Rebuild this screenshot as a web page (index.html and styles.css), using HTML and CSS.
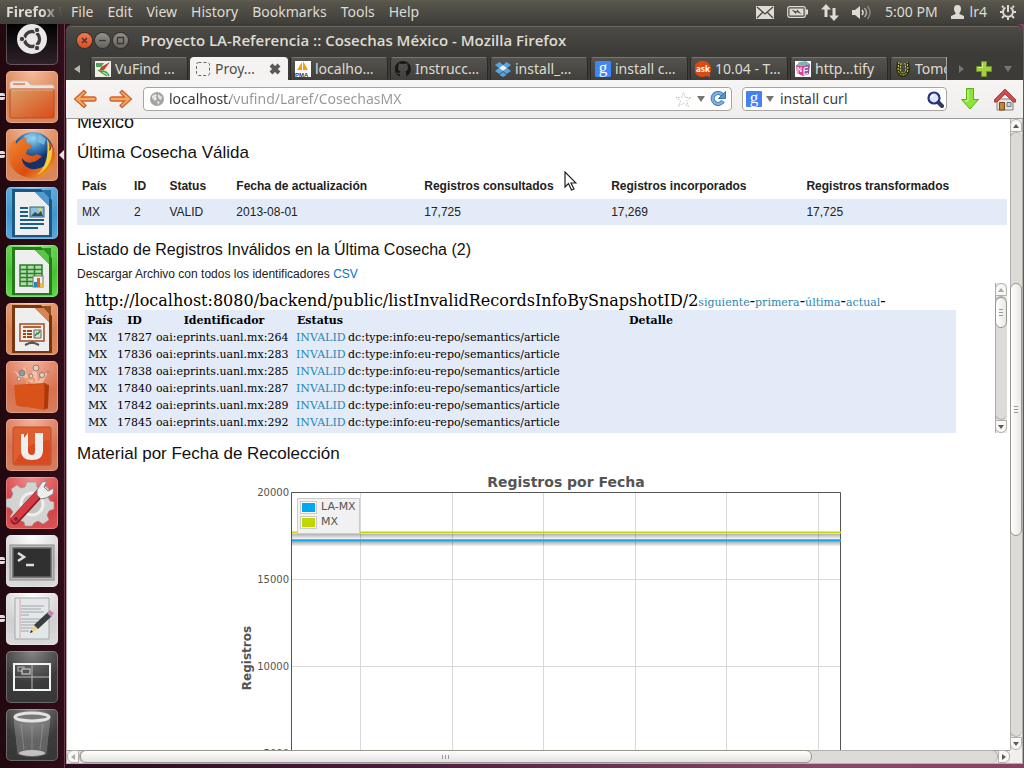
FILE: index.html
```html
<!DOCTYPE html>
<html lang="es">
<head>
<meta charset="utf-8">
<title>Proyecto LA-Referencia :: Cosechas México</title>
<link rel="stylesheet" href="styles.css">
</head>
<body>
<header class="panel">
  <span class="app-name">Firefox <span class="app-fade">W</span></span>
  <nav class="menus" aria-label="Menu">
    <button>File</button><button>Edit</button><button>View</button><button>History</button><button>Bookmarks</button><button>Tools</button><button>Help</button>
  </nav>
  <div class="tray">
    <button aria-label="Mail"><svg width="18" height="14" viewBox="0 0 18 14"><rect width="18" height="13" y="1" fill="#dfdbd2"/><path d="M1 2l8 7 8-7M1 13l6-6M17 13l-6-6" fill="none" stroke="#47463f" stroke-width="1.3"/></svg></button>
    <button aria-label="Battery"><svg width="21" height="12" viewBox="0 0 21 12"><rect x=".7" y=".7" width="17.6" height="10.6" rx="2" fill="none" stroke="#dfdbd2" stroke-width="1.2"/><rect x="2.500" y="2.500" width="14" height="7" fill="#dfdbd2"/><rect x="19" y="3.500" width="2" height="5" fill="#dfdbd2"/><path d="M4.500 3.500l5 2 .5-2 4.500 4.500-5-2-.5 2z" fill="#47463f"/></svg></button>
    <button aria-label="Network"><svg width="18" height="17" viewBox="0 0 18 17" fill="#dfdbd2"><path d="M5 0l5 5.500H6.500V13h-3V5.500H0zM13 17l-5-5.500h3.500V4h3v7.500H18z"/></svg></button>
    <button aria-label="Volume"><svg width="20" height="15" viewBox="0 0 20 15"><path d="M0 5h3l5-4v13l-5-4H0z" fill="#dfdbd2"/><g fill="none" stroke-width="1.600"><path d="M10 5q2 2.500 0 5" stroke="#dfdbd2"/><path d="M12.500 3q4 4.500 0 9" stroke="#aaa79d"/><path d="M15.500 1q5 6.500 0 13" stroke="#85837b"/></g></svg></button>
    <button class="clock">5:00 PM</button>
    <button class="user"><svg width="13" height="14" viewBox="0 0 13 14"><path d="M6.500 0c2.500 0 3.500 1.500 3.500 4 0 2-1 3-1.500 4v1l4.500 2v3H0v-3l4.500-2V8C4 7 3 6 3 4c0-2.500 1-4 3.500-4z" fill="#dfdbd2"/></svg>lr4</button>
    <button aria-label="Session"><svg width="16" height="16" viewBox="0 0 16 16" fill="none" stroke="#dfdbd2"><path d="M5.500 3.500a5 5 0 1 0 5 0" stroke-width="2"/><path d="M8 1v7" stroke-width="2"/><path d="M3.500 3.500L2 2M12.500 3.500L14 2M2.500 8H0M13.500 8H16M4 12l-2 2M12 12l2 2M8 13.500V16" stroke-width="2"/></svg></button>
  </div>
</header>

<div class="desktop">
<aside class="launcher">
  <button class="tile dash" aria-label="Dash"><svg viewBox="0 0 52 52"><circle cx="26" cy="26" r="15" fill="#e9e8e8"/><circle cx="26" cy="26" r="7.500" fill="none" stroke="#453a40" stroke-width="3.400"/><g stroke="#e9e8e8" stroke-width="1.500"><path d="M26 26H12M26 26l7 12M26 26l7-12"/></g><circle cx="26" cy="26" r="5.500" fill="#e9e8e8"/><g fill="#453a40" stroke="#e9e8e8"><circle cx="16" cy="26" r="2.700"/><circle cx="31" cy="17" r="2.700"/><circle cx="31" cy="35" r="2.700"/></g></svg></button>
  <button class="tile orange running" aria-label="Files"><svg viewBox="0 0 52 52"><defs><linearGradient id="fo" x2="1" y2="1"><stop stop-color="#d9a066"/><stop offset="1" stop-color="#dc4a18"/></linearGradient></defs><path d="M4 21V12l2-2h15l4 4h22l1 2v6z" fill="#eee4df" stroke="#d7b7a6"/><path d="M7 13h12" stroke="#e49468" stroke-width="2"/><rect x="4" y="18" width="44" height="29" rx="1" fill="url(#fo)" stroke="#b94d24"/><path d="M5 19h42" stroke="#ebb184"/></svg></button>
  <button class="tile orange running active" aria-label="Firefox"><svg viewBox="0 0 52 52"><defs><radialGradient id="gl" cx=".5" cy=".15"><stop stop-color="#9ed7f1"/><stop offset=".5" stop-color="#3b83bf"/><stop offset="1" stop-color="#14316a"/></radialGradient><linearGradient id="fx" x2="1" y2="1"><stop stop-color="#f18a2c"/><stop offset=".6" stop-color="#db4c14"/><stop offset="1" stop-color="#f3bb34"/></linearGradient></defs><circle cx="27" cy="24" r="21" fill="url(#gl)"/><path d="M18 7l6-2 3 4-5 5zM33 5l7 5-2 6-6-3z" fill="#8ec8e4" opacity=".7"/><path d="M5 14l4-4 1 5c4-5 7-6 11-6-2 3-1 4 1 6l4 1c1 2-3 4-5 5l-1 4c3 1 6 3 9 1 3-1 5 0 7 2-3 1-4 4-9 5-5 2-9-1-11-4 0 7 6 12 14 11 9-1 15-8 15-17 0-5-1-9-5-13 6 4 9 11 9 18 0 12-10 21-22 21C13 49 3 39 3 27c0-5 0-9 2-13z" fill="url(#fx)"/><path d="M41 10c3 5 3 9 2 12 2-1 2-3 3-5 2 14-6 25-15 29 8-7 12-17 10-36z" fill="#f7cd3e"/></svg></button>
  <button class="tile blue" aria-label="Writer"><svg viewBox="0 0 52 52"><path d="M6 2h29l11 11v37H6z" fill="#1c5684"/><path d="M9 5h20l14 14v29H9z" fill="#eee"/><path d="M29 5l14 14V10l-5-5z" fill="#4e9dce"/><path d="M36 3h9v10z" fill="#286e9e"/><path d="M14 21h8M14 25h8M14 29h8M14 33h24M14 37h24M14 41h18" stroke="#195d8c" stroke-width="2"/><rect x="24" y="20" width="14" height="10" fill="#8bc2e0" stroke="#34627c"/><path d="M25 29l4-4 3 2 3-3 2 5z" fill="#364d4a"/><circle cx="34" cy="22.500" r="1.500" fill="#f7cf3c"/></svg></button>
  <button class="tile green" aria-label="Calc"><svg viewBox="0 0 52 52"><path d="M6 2h29l11 11v37H6z" fill="#257a1c"/><path d="M9 5h20l14 14v29H9z" fill="#eee"/><path d="M29 5l14 14V10l-5-5z" fill="#5ac646"/><path d="M36 3h9v10z" fill="#2f8f25"/><path d="M14 20h22v21H14z" fill="#b5dba9"/><path d="M14 20h22v21H14zM14 24.500h22M14 28.500h22M14 32.500h22M14 36.500h22M21 20v21M28.500 20v21" stroke="#28812a" stroke-width="1.500" fill="none"/><rect x="27" y="31" width="10" height="11" fill="#eee" stroke="#777"/><path d="M28 37h3v5h-3z" fill="#1b86c4"/><path d="M31 33h3v9h-3z" fill="#da6421"/><path d="M34 38h3v4h-3z" fill="#edc134"/></svg></button>
  <button class="tile orange" aria-label="Impress"><svg viewBox="0 0 52 52"><path d="M6 2h29l11 11v37H6z" fill="#783710"/><path d="M9 5h20l14 14v29H9z" fill="#eee"/><path d="M29 5l14 14V10l-5-5z" fill="#d78752"/><path d="M36 3h9v10z" fill="#944c20"/><rect x="14" y="21" width="24" height="17" fill="#f8eee7" stroke="#9e4e21" stroke-width="1.500"/><path d="M17 24h18" stroke="#b76334" stroke-width="2"/><path d="M17 28h3M17 31h3M17 34h3M21 28h5M21 31h5M21 34h5" stroke="#944a20" stroke-width="2"/><path d="M28 27h7v8h-7z" fill="#ddd" stroke="#666"/><path d="M29 33l2-3 1 1 2-3" stroke="#239641" fill="none" stroke-width="1.400"/><path d="M26 38v3M26 39l-7 3M26 39l7 3" stroke="#555" stroke-width="2"/></svg></button>
  <button class="tile coral" aria-label="Software Center"><svg viewBox="0 0 52 52"><path d="M25 22L8 9l7 12L18 5l5 14L30 3l2 17 11-11-7 14z" fill="#fff" opacity=".4"/><g fill="#dcd5cc" stroke="#a57567"><circle cx="16" cy="12" r="3" fill="#7d9db6"/><circle cx="30" cy="7" r="3"/><circle cx="36" cy="14" r="2.500"/><circle cx="25" cy="15" r="2"/><circle cx="13" cy="18" r="2"/><circle cx="42" cy="11" r="1"/></g><path d="M9 24l31-2 2 26-30-3z" fill="#c9410f"/><path d="M8 24l30-1 1 26-29-5z" fill="#d9521a"/><path d="M39 23l4 1-1 22-4 3z" fill="#a9390d"/><path d="M21 23v-5h7v5" fill="none" stroke="#e7a168" stroke-width="2"/></svg></button>
  <button class="tile coral" aria-label="Ubuntu One"><svg viewBox="0 0 52 52"><rect x="7" y="8" width="38" height="38" rx="2" fill="#de5e32" stroke="#b54f2e"/><path d="M8 45q10-22 36-24v24z" fill="#d94a20"/><path d="M15 15h3v4l4-5v18q0 4 4 4 3 0 3-4V14h8v17c0 7-4 10-11 10s-11-3-11-10z" fill="#eee"/></svg></button>
  <button class="tile red" aria-label="System Settings"><svg viewBox="0 0 52 52"><g fill="#d3d3d1" stroke="#99908e" stroke-width=".6"><path d="M21 5h9l1 5 4 2 5-3 5 6-3 5 2 4 4 1v7l-5 2-2 4 2 5-6 4-5-3-4 2-2 3h-7l-1-4-5-2-4 2-5-5 3-5-3-4-4-1v-8l5-1 2-4-2-5 6-4 4 3 4-1z"/></g><circle cx="26" cy="27" r="11" fill="#c3c3c0" stroke="#eee" stroke-width="3"/><path d="M9 43l25-27" stroke="#8a1c22" stroke-width="9" stroke-linecap="round"/><path d="M9 42l24-26" stroke="#d53b43" stroke-width="7" stroke-linecap="round"/><path d="M31 13l5-8 5-1-3 6 4 4 6-3-1 6-7 4-5 1-4-4z" fill="#eee" stroke="#85807c"/><circle cx="10" cy="42" r="2" fill="#7f2528"/></svg></button>
  <button class="tile light running" aria-label="Terminal"><svg viewBox="0 0 52 52"><rect x="4" y="10" width="44" height="35" fill="#b9b9b9" stroke="#8b8b8b"/><rect x="7" y="13" width="38" height="29" fill="#303030" stroke="#666" stroke-width="1.500"/><path d="M12 18l6 4-6 4M20 30h8" fill="none" stroke="#ddd" stroke-width="2.600"/></svg></button>
  <button class="tile light running" aria-label="Text Editor"><svg viewBox="0 0 52 52"><path d="M9 5h34v41H9z" fill="#e4e7e8" stroke="#a5a8aa"/><path d="M14 6v39" stroke="#e5a4a6"/><path d="M15 13h23M15 16h20M15 19h23M15 22h8M15 26h21M15 29h20M15 32h16M15 35h12M15 38h8" stroke="#9ba6ad" stroke-width="1.200"/><path d="M24 40l4-8 4 4z" fill="#e9d48c"/><path d="M28 32l14-13 4 4-14 13z" fill="#393e42"/><path d="M41 20l3-3 4 3-3 4z" fill="#c487ad"/><path d="M24 40l1-3 2 2z" fill="#222"/></svg></button>
  <button class="tile dark" aria-label="Workspace Switcher"><svg viewBox="0 0 52 52"><g fill="none" stroke="#bbb"><path d="M26 13v26M8 26h36"/><rect x="8" y="13" width="36" height="26" stroke="#f5f5f5" stroke-width="2"/><rect x="12" y="16" width="6" height="4"/><rect x="16" y="18" width="8" height="5" fill="#555" stroke="#ddd"/></g></svg></button>
  <button class="tile dark" aria-label="Trash"><svg viewBox="0 0 52 52"><path d="M8 8l4 37q14 5 28 0l4-37z" fill="#ddd" opacity=".25" stroke="#eee"/><ellipse cx="26" cy="44" rx="13" ry="3" fill="#d9d9d9" opacity=".8"/><ellipse cx="26" cy="8" rx="17" ry="4" fill="#777" stroke="#e3e3e3" stroke-width="3"/><path d="M15 15l3 26M26 16v25M37 15l-3 26" stroke="#ddd" opacity=".25"/></svg></button>
</aside>

<main class="window">
  <div class="titlebar">
    <button class="wbtn close" aria-label="Close"><svg viewBox="0 0 15 15"><path d="M5 5l5 5M10 5l-5 5"/></svg></button>
    <button class="wbtn" aria-label="Minimize"><svg viewBox="0 0 15 15"><path d="M4 7.500h7"/></svg></button>
    <button class="wbtn" aria-label="Maximize"><svg viewBox="0 0 15 15"><path d="M4.500 4.500h6v6h-6z"/></svg></button>
    <span class="wtitle">Proyecto LA-Referencia :: Cosechas México - Mozilla Firefox</span>
  </div>
  <div class="tabbar">
    <button class="arrow" aria-label="Scroll tabs left"><svg width="6" height="8"><path d="M6 0v8L0 4z" fill="#b8b5ad"/></svg></button>
    <div class="tabs">
      <button class="tab"><svg viewBox="0 0 16 16"><path d="M0 0h16v16H0z" fill="#f3eee4"/><path d="M1 2h8l-3 4H1z" fill="#4aa35a"/><path d="M15 1L9 9l-5 1 2-4z" fill="#c9402b"/><path d="M3 9l9 6M6 10q6 0 8 5" stroke="#36a447" stroke-width="1.500" fill="none"/></svg><span>VuFind …</span></button>
      <button class="tab current"><svg viewBox="0 0 16 16"><rect x="1.500" y="1.500" width="13" height="13" rx="2" fill="none" stroke="#666" stroke-dasharray="3 2"/></svg><span>Proy…</span><svg class="x" viewBox="0 0 12 12"><path d="M2 2l8 8M10 2l-8 8" stroke="#5a5955" stroke-width="4"/></svg></button>
      <button class="tab"><svg viewBox="0 0 16 16"><path d="M0 0h16v16H0z" fill="#fff"/><path d="M2 9L7 1v8zM8 9V0l5 9z" fill="#f89c0e"/><text x="0" y="16" class="pma">PMA</text></svg><span>localho…</span></button>
      <button class="tab"><svg viewBox="0 0 16 16"><path d="M8 0a8 8 0 0 0-3 15.500V13c-2 .5-3-.5-3.500-2 2 1 2 1 3.500.8.1-.7.300-1 .6-1.300C3.500 10 3 8 3 6.500c0-1 .3-1.500.8-2.200-.2-.8-.1-1.500.1-2.100.9 0 1.600.5 2.200.9a8 8 0 0 1 3.800 0c.7-.4 1.300-.8 2.200-.9.300.8.3 1.400.1 2.100.5.700.8 1.200.8 2.200 0 2-.7 3.500-2.700 4 .5.500.7 1 .7 1.900v3A8 8 0 0 0 8 0z" fill="#191717"/></svg><span>Instrucc…</span></button>
      <button class="tab"><svg viewBox="0 0 16 16"><path d="M4.500 1L8 4l-4 3L0 4zM11.500 1L16 4l-4 3-4-3zM4 7l4 3-3.500 3L0 10zM12 7l4 3-4.500 3L8 10zM4.500 14L8 11l3.500 3L8 16z" fill="#55a6e8"/><path d="M8 4l4 3-4 3-4-3z" fill="#e7f3fb"/></svg><span>install_…</span></button>
      <button class="tab"><svg viewBox="0 0 16 16"><rect width="16" height="16" rx="1" fill="#4285f4"/><text x="8" y="12" class="gicon">g</text></svg><span>install c…</span></button>
      <button class="tab"><svg viewBox="0 0 16 16"><path d="M8 0a8 8 0 0 1 7 12v4l-4-1A8 8 0 1 1 8 0z" fill="#dd4814"/><text x="8" y="11" class="ask">ask</text></svg><span>10.04 - T…</span></button>
      <button class="tab"><svg viewBox="0 0 16 16"><path d="M0 0h16v16H0z" fill="#fff"/><path d="M4 1l7-1 4 3-7 2-6-1z" fill="#74b9b1"/><path d="M1 4l7 1v10l-6-3z" fill="#d63f94"/><path d="M8 5l7-2-1 10-6 2z" fill="#9456a5"/><path d="M3 12V6l3 5V6M9 14V7l4-1M9 10l4-1M9 14l4-2" stroke="#fff" fill="none"/></svg><span>http…tify</span></button>
      <button class="tab"><svg viewBox="0 0 16 16"><path d="M4 1l-1 7q1 6 5 6t5-6l-1-7" fill="none" stroke="#2b2b14" stroke-width="4"/><path d="M4 1L3 8q1 6 5 6t5-6l-1-7M6 2L5 8q1 4 3 4t3-4l-1-6" fill="none" stroke="#e0dc62" stroke-dasharray="2 1"/></svg><span>Tomcat</span></button>
    </div>
    <button class="arrow" aria-label="Scroll tabs right"><svg width="5" height="8"><path d="M0 0v8l5-4z" fill="#77756f"/></svg></button>
    <button class="arrow" aria-label="New tab"><svg width="16" height="16"><path d="M5.500.5h5v5h5v5h-5v5h-5v-5h-5v-5h5z" fill="#a5cf42" stroke="#6b9224"/><path d="M6.500 2v4.500H2" stroke="#d6ed97" fill="none"/></svg></button>
    <button class="arrow" aria-label="List all tabs"><svg width="8" height="6"><path d="M0 0h8L4 6z" fill="#77756f"/></svg></button>
  </div>
  <div class="toolbar">
    <button aria-label="Back"><svg width="24" height="20" viewBox="0 0 24 20"><path d="M1.500 10L11 1.500l2 2L8.500 8H21q2 0 2 2t-2 2H8.500l4.500 4.500-2 2z" fill="#f5a765" stroke="#cf6329" stroke-width="1.300"/></svg></button>
    <button aria-label="Forward"><svg width="24" height="20" viewBox="0 0 24 20"><path d="M22.500 10L13 1.500l-2 2L15.500 8H3q-2 0-2 2t2 2h12.500L11 16.500l2 2z" fill="#f5a765" stroke="#cf6329" stroke-width="1.300"/></svg></button>
    <div class="field address">
      <svg width="14" height="14" viewBox="0 0 14 14"><circle cx="7" cy="7" r="7" fill="#a3a3a1"/><path d="M2 4l3-2 2 1-1 2 1 2-2 2-3-3zM8 2l4 3-1 3-2-1-1-2zM7 9l3 1-2 3z" fill="#e3e3e1"/></svg>
      <input class="url" type="text" aria-label="Address" value="localhost/vufind/Laref/CosechasMX">
      <svg width="17" height="17" viewBox="0 0 17 17"><path d="M8.500 1.500l2 5h5.500l-4.500 3.500 2 5.500-5-3.500-5 3.500 2-5.500L1 6.500h5.500z" fill="#fff" stroke="#c5c5c3" stroke-dasharray="2 1"/></svg>
      <svg width="8" height="6"><path d="M0 0h8L4 6z" fill="#77756f"/></svg>
      <svg width="16" height="16" viewBox="0 0 16 16"><path d="M13 10a5.500 5.500 0 1 1-1-6.500" fill="none" stroke="#386fae" stroke-width="4"/><path d="M13 10a5.500 5.500 0 1 1-1-6.500" fill="none" stroke="#7fb0df" stroke-width="2.500"/><path d="M15.500.5v7h-7z" fill="#5c94cb" stroke="#386fae"/></svg>
    </div>
    <div class="field search">
      <svg width="16" height="16" viewBox="0 0 16 16"><rect width="16" height="16" rx="1" fill="#4380f0"/><text x="8" y="12" class="gicon">g</text></svg>
      <svg width="8" height="6"><path d="M0 0h8L4 6z" fill="#77756f"/></svg>
      <input type="text" aria-label="Search" value="install curl">
      <svg width="17" height="17" viewBox="0 0 17 17"><path d="M10 10l5 5" stroke="#343b55" stroke-width="4" stroke-linecap="round"/><circle cx="7" cy="7" r="5.500" fill="#dce8f5" stroke="#29318a" stroke-width="2.200"/><path d="M4 6q1-2 3-2" stroke="#fff" fill="none" stroke-width="1.500"/></svg>
    </div>
    <button class="download" aria-label="Downloads"><svg width="18" height="22" viewBox="0 0 18 22"><path d="M5.500.5h7v11h5L9 21 .5 11.500h5z" fill="#8fe43a" stroke="#58b217"/><path d="M7 2v11H4" stroke="#d0f89d" fill="none"/></svg></button>
    <button aria-label="Home"><svg width="22" height="23" viewBox="0 0 22 23"><path d="M3 11h16v11H3z" fill="#e8e6e2" stroke="#85817c"/><path d="M0 12L11 1l11 11v2h-3l-8-8-8 8H0z" fill="#d24b4c" stroke="#9b2c30" stroke-width=".8"/><path d="M5.500 14.500h5V22h-5z" fill="#c98332" stroke="#744717"/><path d="M13 14.500h4v4h-4z" fill="#b9d9e7" stroke="#6d7b83"/></svg></button>
  </div>

  <div class="viewport">
    <div class="page">
      <h2 class="country">México</h2>
      <h3 class="last">Última Cosecha Válida</h3>
      <table class="harvest">
        <colgroup><col class="c1"><col class="c2"><col class="c3"><col class="c4"><col class="c5"><col class="c6"><col></colgroup>
        <thead><tr><th>País</th><th>ID</th><th>Status</th><th>Fecha de actualización</th><th>Registros consultados</th><th>Registros incorporados</th><th>Registros transformados</th></tr></thead>
        <tbody><tr><td>MX</td><td>2</td><td>VALID</td><td>2013-08-01</td><td>17,725</td><td>17,269</td><td>17,725</td></tr></tbody>
      </table>
      <h3 class="listing">Listado de Registros Inválidos en la Última Cosecha (2)</h3>
      <p class="csv">Descargar Archivo con todos los identificadores <a href="#csv">CSV</a></p>
      <div class="frame">
        <div class="frame-body">
          <div class="endpoint">http://localhost:8080/backend/public/listInvalidRecordsInfoBySnapshotID/2<a href="#siguiente">siguiente</a>-<a href="#primera">primera</a>-<a href="#ultima">última</a>-<a href="#actual">actual</a>-</div>
          <div class="records">
            <table>
              <colgroup><col class="r1"><col class="r2"><col class="r3"><col class="r4"><col></colgroup>
              <thead><tr><th>País</th><th>ID</th><th>Identificador</th><th>Estatus</th><th>Detalle</th></tr></thead>
              <tbody>
                <tr><td>MX</td><td>17827</td><td>oai:eprints.uanl.mx:264</td><td><a href="#17827">INVALID</a></td><td>dc:type:info:eu-repo/semantics/article</td></tr>
                <tr><td>MX</td><td>17836</td><td>oai:eprints.uanl.mx:283</td><td><a href="#17836">INVALID</a></td><td>dc:type:info:eu-repo/semantics/article</td></tr>
                <tr><td>MX</td><td>17838</td><td>oai:eprints.uanl.mx:285</td><td><a href="#17838">INVALID</a></td><td>dc:type:info:eu-repo/semantics/article</td></tr>
                <tr><td>MX</td><td>17840</td><td>oai:eprints.uanl.mx:287</td><td><a href="#17840">INVALID</a></td><td>dc:type:info:eu-repo/semantics/article</td></tr>
                <tr><td>MX</td><td>17842</td><td>oai:eprints.uanl.mx:289</td><td><a href="#17842">INVALID</a></td><td>dc:type:info:eu-repo/semantics/article</td></tr>
                <tr><td>MX</td><td>17845</td><td>oai:eprints.uanl.mx:292</td><td><a href="#17845">INVALID</a></td><td>dc:type:info:eu-repo/semantics/article</td></tr>
              </tbody>
            </table>
          </div>
        </div>
        <div class="vbar inner">
          <span class="cap top off"><svg width="6" height="4"><path d="M0 4h6L3 0z"/></svg></span>
          <span class="track"><span class="thumb t-frame"><i></i></span><span class="rest r-frame"></span></span>
          <span class="cap bottom"><svg width="6" height="4"><path d="M0 0h6L3 4z"/></svg></span>
        </div>
      </div>
      <h3 class="material">Material por Fecha de Recolección</h3>
      <svg class="chart" width="602" height="400" viewBox="0 0 602 400">
        <text x="325" y="17" class="ctitle">Registros por Fecha</text>
        <path d="M119.500 22v378M211.500 22v378M302.500 22v378M394.500 22v378M485.500 22v378M577.500 22v378M50 109.500h550M50 196.500h550M50 283.500h550" stroke="#d9d9d9"/>
        <defs><linearGradient id="sh" x2="0" y2="1"><stop stop-opacity=".3"/><stop offset="1" stop-opacity=".04"/></linearGradient></defs>
        <path d="M51 64h548v5H51zM51 72h548v5H51z" fill="none"/>
        <rect x="51" y="64" width="548" height="5" fill="url(#sh)"/><rect x="51" y="72" width="548" height="4" fill="url(#sh)"/>
        <path d="M50.500 400V22.500h549V400" fill="none" stroke="#545454"/>
        <path d="M51 62.500h549" stroke="#bfd70b" stroke-width="2"/>
        <path d="M51 70.500h549" stroke="#14a5ea" stroke-width="2.500"/>
        <rect x="56.500" y="28.500" width="62" height="35" fill="#f1f1f1" stroke="#ccc"/>
        <g fill="#fff" stroke="#ccc"><rect x="59.500" y="31.500" width="16" height="12"/><rect x="59.500" y="46.500" width="16" height="12"/></g>
        <path d="M61 33h13v9H61z" fill="#00a8f0"/><path d="M61 48h13v9H61z" fill="#c0d800"/>
        <g class="clegend"><text x="80" y="40">LA-MX</text><text x="80" y="55">MX</text></g>
        <g class="ctick"><text x="48" y="26">20000</text><text x="48" y="113">15000</text><text x="48" y="200">10000</text><text x="48" y="287">5000</text></g>
        <text class="caxis" transform="translate(10 188) rotate(-90)">Registros</text>
      </svg>
    </div>
    <div class="vbar outer">
      <span class="cap top"><svg width="6" height="4"><path d="M0 4h6L3 0z"/></svg></span>
      <span class="track"><span class="rest r-above"></span><span class="thumb t-page"><i></i></span><span class="rest r-below"></span></span>
      <span class="cap bottom"><svg width="6" height="4"><path d="M0 0h6L3 4z"/></svg></span>
    </div>
    <div class="hbar">
      <span class="cap left off"><svg width="4" height="6"><path d="M4 0v6L0 3z"/></svg></span>
      <span class="track"><span class="thumb t-wide"><i></i></span><span class="rest r-wide"></span></span>
      <span class="cap right"><svg width="4" height="6"><path d="M0 0v6l4-3z"/></svg></span>
    </div>
    <div class="corner"></div>
  </div>
</main>
</div>
<svg class="pointer" width="13" height="20" viewBox="0 0 13 20"><path d="M1 1v15l3.500-3.500L7.500 19l2.500-1-3-6h5z" fill="#fff" stroke="#222" stroke-width="1.200"/></svg>
</body>
</html>
```

FILE: styles.css
```css
* { box-sizing: border-box; }

body {
  margin: 0;
  height: 100vh;
  display: flex;
  flex-direction: column;
  overflow: hidden;
  background: linear-gradient(90deg, #2a0d20 10%, #4d1c3c 40%, #874868 80%, #8a415f);
  font: 14px/20px "Noto Sans", sans-serif;
}

button {
  border: 0;
  padding: 0;
  margin: 0;
  background: none;
  color: inherit;
  font: inherit;
  display: flex;
  align-items: center;
}

svg { display: block; flex: none; }
a { text-decoration: none; }
h2, h3, p { margin: 0; font-weight: normal; }

/* Top panel */
.panel {
  flex: none;
  height: 24px;
  display: flex;
  align-items: center;
  padding: 0 8px 0 6px;
  background: linear-gradient(#5e5c50, #55534a 15%, #3f3e39);
  color: #dfdbd2;
}
.app-name {
  width: 56px;
  margin-right: 9px;
  overflow: hidden;
  white-space: nowrap;
  font: bold 14px/20px "Open Sans", sans-serif;
  -webkit-mask-image: linear-gradient(90deg, #000 65%, transparent);
  mask-image: linear-gradient(90deg, #000 65%, transparent);
}
.menus { display: flex; gap: 14px; }
.tray { display: flex; align-items: center; margin-left: auto; gap: 13px; }
.user { gap: 6px; }

/* Launcher */
.desktop { flex: 1; display: flex; min-height: 0; }
.launcher {
  flex: none;
  width: 65px;
  display: flex;
  flex-direction: column;
  gap: 6px;
  padding-left: 6px;
  overflow: hidden;
  background: linear-gradient(90deg, #22080f, #300d18);
  border-right: 1px solid #6b3a4d;
}
.tile {
  position: relative;
  flex: none;
  width: 52px;
  height: 52px;
  border-radius: 5px;
  box-shadow: inset 0 0 0 1px rgba(255, 255, 255, .25);
}
.tile svg { width: 52px; height: 52px; }
.dash { margin-top: -11px; background: linear-gradient(#000 20%, #30222a); }
.orange { background: radial-gradient(circle at 50% 0, #f6bd9c, #d98051 60%, #d88a5d); }
.coral { background: radial-gradient(circle at 50% 0, #f3b49c, #d8714e 60%, #d5805f); }
.blue { background: radial-gradient(circle at 50% 0, #8ec9ee, #3f95cd 60%, #56a9dd); }
.green { background: radial-gradient(circle at 50% 0, #95ee7f, #45c332 60%, #61d84c); }
.red { background: radial-gradient(circle at 50% 0, #f69090, #d43f42 60%, #d95558); }
.light { background: radial-gradient(circle at 50% 0, #fff, #cfcfcf 60%, #ddd); }
.dark { background: radial-gradient(circle at 50% 0, #858585, #3c3c3c 55%, #363636); }
.running::before {
  content: "";
  position: absolute;
  left: -6px;
  top: 22px;
  width: 5px;
  height: 1px;
  border: solid #ddd;
  border-width: 3px 0;
  border-radius: 0 2px 2px 0;
}
.active::after {
  content: "";
  position: absolute;
  right: -6px;
  top: 21px;
  border: solid transparent;
  border-width: 5px 5px 5px 0;
  border-right-color: #e4e4e4;
}

/* Window chrome */
.window {
  flex: 1;
  min-width: 0;
  display: flex;
  flex-direction: column;
  margin: 2px 1px 4px;
  border-radius: 6px 6px 0 0;
  background: #3c3b37;
  box-shadow: 0 -2px #3c3b37;
}
.titlebar {
  height: 27px;
  flex: none;
  display: flex;
  align-items: center;
  gap: 3px;
  padding-left: 11px;
  border-top: 1px solid #69675f;
  border-radius: 6px 6px 0 0;
  background: linear-gradient(#4b4a45, #3c3b37);
}
.wbtn {
  width: 15px;
  height: 15px;
  border-radius: 50%;
  background: linear-gradient(#93918a, #65635d);
  box-shadow: 0 0 0 1px #31302c;
}
.wbtn svg { width: 15px; height: 15px; fill: none; stroke: #393834; stroke-width: 1.3; }
.close { background: linear-gradient(#f5794f, #db4c20); }
.wtitle {
  margin-left: 10px;
  color: #dfdbd2;
  font: 600 15px/20px "Open Sans", sans-serif;
  white-space: nowrap;
}
.tabbar {
  height: 27px;
  flex: none;
  display: flex;
  align-items: center;
  gap: 12px;
  padding: 4px 11px 0 8px;
}
.tabs {
  flex: 1;
  min-width: 0;
  display: flex;
  gap: 2px;
  height: 23px;
  margin-left: -2px;
  overflow: hidden;
  border-right: 1px solid #aaa79f;
}
.tab {
  flex: none;
  width: 98px;
  height: 23px;
  gap: 4px;
  padding: 0 4px;
  overflow: hidden;
  white-space: nowrap;
  color: #dfdbd2;
  border: 1px solid #292825;
  border-top-color: #77756d;
  border-bottom: 0;
  border-radius: 4px 4px 0 0;
  background: linear-gradient(#55534e, #403f3b);
}
.tab svg { width: 16px; height: 16px; }
.tab .x { width: 12px; height: 12px; margin: 0 2px 0 auto; }
.tab.current { color: #4c4c4c; background: #f4f3f2; border-color: #f4f3f2; }
.pma { font: bold 6px "Liberation Sans", sans-serif; fill: #333366; }
.gicon { font: 17px "Liberation Serif", serif; fill: #fff; text-anchor: middle; }
.ask { font: bold 8px "Open Sans", sans-serif; fill: #fff; text-anchor: middle; }

.toolbar {
  flex: none;
  height: 39px;
  display: flex;
  align-items: center;
  gap: 12px;
  padding: 0 7px;
  background: linear-gradient(#f6f5f4, #efeeec);
  border-bottom: 1px solid #999;
}
.field {
  height: 24px;
  display: flex;
  align-items: center;
  gap: 5px;
  padding: 0 5px;
  background: #fff;
  border: 1px solid #a8a5a0;
  border-radius: 4px;
}
.address { flex: 1; margin-left: -2px; padding-left: 6px; }
.search { width: 205px; padding: 0 2px 0 3px; margin-left: -2px; gap: 4px; }
.field input {
  flex: 1;
  min-width: 0;
  height: 20px;
  padding: 0;
  border: 0;
  outline: 0;
  background: none;
  color: #3c3c3c;
  font: 14px/20px "Noto Sans", sans-serif;
}
.search input { padding-left: 2px; }
.field .url {
  color: transparent;
  background: linear-gradient(90deg, #333 61px, #969696 61px);
  -webkit-background-clip: text;
  background-clip: text;
}
.download { margin: 0 3px 0 2px; }

/* Content area and scroll bars */
.viewport {
  flex: 1;
  min-height: 0;
  display: grid;
  grid-template: minmax(0, 1fr) 13px / minmax(0, 1fr) 12px;
  background: #fff;
  border: solid #b3b0aa;
  border-width: 0 1px 1px;
}
.vbar, .hbar { display: flex; background: #ebe9e7; }
.vbar { flex-direction: column; width: 12px; box-shadow: inset 1px 0 #aaa7a2; }
.hbar { box-shadow: inset 0 1px #999; }
.corner { background: #f0efee; }
.track {
  flex: 1;
  display: flex;
  border: 1px solid #b3b0ab;
  border-radius: 6px;
  background: #dddbd8;
}
.vbar .track { flex-direction: column; border-width: 1px 0 1px 1px; }
.hbar .track { border-width: 1px 1px 0; }
.cap {
  flex: none;
  display: flex;
  align-items: center;
  justify-content: center;
  border: 1px solid #b3b0ab;
  background: #f8f7f7;
}
.vbar .cap { height: 13px; }
.hbar .cap { width: 12px; }
.cap svg { fill: #5c5a56; }
.cap.off svg { fill: #aaa; }
.top { border-radius: 6px 6px 0 0; }
.bottom { border-radius: 0 0 6px 6px; }
.left { border-radius: 6px 0 0 6px; }
.right { border-radius: 0 6px 6px 0; }
.thumb {
  display: flex;
  align-items: center;
  justify-content: center;
  border: 1px solid #99958f;
  border-radius: 6px;
  background: linear-gradient(90deg, #fff, #e9e8e6);
}
.vbar .thumb { margin-left: -1px; }
.hbar .thumb { margin-top: -1px; }
.thumb i {
  width: 4px;
  height: 7px;
  background: repeating-linear-gradient(#999 0 1px, transparent 1px 3px);
}
.hbar .thumb { background: linear-gradient(#fff, #e3e2e0); }
.hbar .thumb i {
  width: 7px;
  height: 4px;
  background: repeating-linear-gradient(90deg, #999 0 1px, transparent 1px 3px);
}
.t-frame { flex: 30; }
.r-frame { flex: 94; }
.r-above { flex: 151; }
.t-page { flex: 253; }
.r-below { flex: 202; }
.t-wide { flex: 732; }
.r-wide { flex: 186; }

/* Page */
.page {
  overflow: hidden;
  padding: 0 3px 0 10px;
  font: 12px/18px "Liberation Sans", Arial, sans-serif;
  color: #222;
}
.page h2, .page h3 { line-height: 20px; font-size: 17px; color: #111; }
.page .country { font-size: 18px; margin-top: -7px; }
.last { margin: 11px 0 10px; }
table { border-collapse: collapse; table-layout: fixed; width: 100%; }
.harvest th, .harvest td {
  height: 26px;
  padding: 0 5px;
  text-align: left;
  white-space: nowrap;
}
.harvest tbody { background: #e4ebf8; }
.c1 { width: 5.6%; }
.c2 { width: 3.8%; }
.c3 { width: 7.2%; }
.c4 { width: 20.2%; }
.c5 { width: 20.1%; }
.c6 { width: 21%; }
.page .listing { margin: 15px 0 5px; font-size: 16px; }
.csv a { color: #0a6fcc; }

.frame { height: 150px; display: flex; }
.frame-body {
  flex: 1;
  min-width: 0;
  display: flex;
  flex-direction: column;
  padding: 8px 8px 0;
  overflow: hidden;
  color: #000;
  font: 11px/17px "DejaVu Serif", serif;
}
.frame-body a { color: #2887b5; }
.endpoint { font-size: 16px; line-height: 19px; white-space: nowrap; }
.endpoint a { font-size: 11px; line-height: 11px; }
.records { flex: 1; margin-right: 31px; padding-top: 2px; background: #e4ebf8; }
.records th, .records td { height: 17px; padding: 0; white-space: nowrap; }
.records td { padding-left: 2px; }
.records td:first-child { padding-left: 3px; }
.r1 { width: 30px; }
.r2 { width: 39px; }
.r3 { width: 140px; }
.r4 { width: 52px; }

.material { margin: 11px 0 6px; }
.chart { margin: 0 auto; font-family: "DejaVu Sans", sans-serif; fill: #545454; }
.ctitle { font-size: 14px; font-weight: bold; text-anchor: middle; }
.ctick { font-size: 10px; text-anchor: end; }
.clegend { font-size: 11px; }
.caxis { font-size: 12px; font-weight: bold; text-anchor: middle; }

.pointer { position: absolute; left: 564px; top: 171px; }
```
